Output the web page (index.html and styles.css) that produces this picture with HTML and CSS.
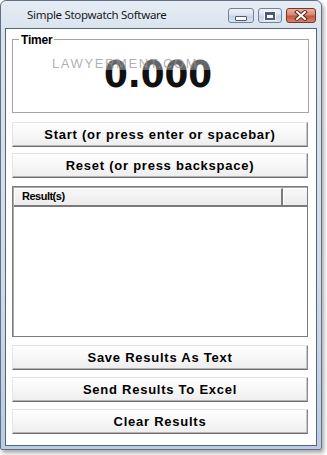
FILE: index.html
```html
<!DOCTYPE html>
<html>
<head>
<meta charset="utf-8">
<title>Simple Stopwatch Software</title>
<link rel="stylesheet" href="styles.css">
</head>
<body>
<div class="window">
  <div class="titlebar">
    <span class="title">Simple Stopwatch Software</span>
    <div class="caption-buttons">
      <div class="cbtn cbtn-min"><span class="min-glyph"></span></div>
      <div class="cbtn cbtn-max"><span class="max-glyph"></span></div>
      <div class="cbtn cbtn-close">
        <svg width="14" height="11" viewBox="0 0 14 11">
          <path d="M3 2 L11 9 M11 2 L3 9" stroke="#5a2a20" stroke-width="4" stroke-linecap="square"/>
          <path d="M3 2 L11 9 M11 2 L3 9" stroke="#ffffff" stroke-width="2" stroke-linecap="square"/>
        </svg>
      </div>
    </div>
  </div>
  <div class="client">
    <div class="groupbox">
      <span class="group-label">Timer</span>
      <div class="timer-value">0.000</div>
      <div class="watermark">LAWYERMENT.COM</div>
    </div>
    <div class="btn btn-start">Start (or press enter or spacebar)</div>
    <div class="btn btn-reset">Reset (or press backspace)</div>
    <div class="listview">
      <div class="lv-header">
        <div class="lv-col lv-col-main">Result(s)</div>
        <div class="lv-col lv-col-rest"></div>
      </div>
      <div class="lv-body"></div>
    </div>
    <div class="btn btn-save">Save Results As Text</div>
    <div class="btn btn-send">Send Results To Excel</div>
    <div class="btn btn-clear">Clear Results</div>
  </div>
</div>
</body>
</html>
```
FILE: styles.css
```css
html, body {
  margin: 0;
  padding: 0;
  background: #ffffff;
}
body {
  width: 327px;
  height: 455px;
  overflow: hidden;
}
.window {
  box-sizing: border-box;
  width: 322px;
  height: 450px;
  border: 1px solid #5f7088;
  border-radius: 6px 6px 2px 2px;
  background: linear-gradient(180deg, #e6edf5 0px, #dae4ef 27px, #cfdceb 60%, #b9cde2 100%);
  padding: 0 4px 3px 4px;
  display: flex;
  flex-direction: column;
  box-shadow: 2px 3px 4px rgba(0, 0, 0, 0.35);
}
.titlebar {
  height: 27px;
  flex: none;
  display: flex;
  align-items: flex-start;
}
.title {
  margin-left: 22px;
  margin-top: 5px;
  font-family: "Noto Sans", "Open Sans", sans-serif;
  font-size: 11.5px;
  line-height: 17px;
  color: #1a1a1a;
  letter-spacing: -0.3px;
}
.caption-buttons {
  margin-left: auto;
  margin-right: 1px;
  margin-top: 7px;
  display: flex;
  gap: 4px;
}
.cbtn {
  box-sizing: border-box;
  height: 15px;
  border: 1px solid #71839c;
  border-radius: 3px;
  display: flex;
  align-items: center;
  justify-content: center;
  background: linear-gradient(180deg, #eef3f9 0%, #d8e3ef 48%, #c3d3e5 52%, #d9e5f1 100%);
}
.cbtn-min { width: 26px; }
.cbtn-max { width: 24px; }
.cbtn-close {
  width: 30px;
  border-color: #7a3426;
  background: linear-gradient(180deg, #eab1a2 0%, #d8836d 48%, #c4533a 52%, #d7836a 100%);
}
.min-glyph {
  width: 10px;
  height: 3px;
  margin-top: 5px;
  border: 1px solid #4c5b70;
  background: #ffffff;
  border-radius: 1px;
}
.max-glyph {
  box-sizing: border-box;
  width: 10px;
  height: 8px;
  border: 1px solid #4c5b70;
  border-top-width: 2px;
  background: #ffffff;
  box-shadow: inset 0 0 0 1px #4c5b70;
  outline: 1px solid rgba(255,255,255,0.7);
}
.client {
  flex: 1;
  box-sizing: border-box;
  background: #ffffff;
  border: 1px solid #56657a;
  padding: 0 8px 0 6px;
  display: flex;
  flex-direction: column;
}
.groupbox {
  position: relative;
  box-sizing: border-box;
  margin-top: 10px;
  width: 297px;
  height: 74px;
  border: 1px solid #a5a5a5;
  display: flex;
  justify-content: center;
  align-items: flex-start;
}
.group-label {
  position: absolute;
  top: -7px;
  left: 6px;
  padding: 0 2px;
  background: #ffffff;
  font-family: "Liberation Sans", Arial, sans-serif;
  font-weight: bold;
  font-size: 12px;
  line-height: 14px;
  color: #000000;
  letter-spacing: -0.2px;
}
.timer-value {
  margin-top: 12px;
  margin-left: -5px;
  font-family: "DejaVu Sans Condensed", "DejaVu Sans", sans-serif;
  font-stretch: condensed;
  font-weight: bold;
  font-size: 38px;
  line-height: 44px;
  color: #111111;
}
.watermark {
  position: absolute;
  left: 39px;
  top: 17px;
  width: 164px;
  height: 13px;
  font-family: "Liberation Sans", Arial, sans-serif;
  font-size: 13px;
  line-height: 13px;
  letter-spacing: 1.6px;
  color: rgba(150, 150, 150, 0.75);
  background: linear-gradient(90deg, rgba(255,255,255,0) 0%, rgba(255,255,255,0.35) 30%, rgba(255,255,255,0.35) 100%);
}
.btn {
  box-sizing: border-box;
  width: 296px;
  height: 25px;
  border: 1px solid;
  border-color: #e4e4e4 #8a8a8a #6e6e6e #e4e4e4;
  box-shadow: inset 0 -1px 0 #b4b4b4, inset -1px 0 0 #c8c8c8;
  background: linear-gradient(180deg, #ffffff 0%, #f7f7f7 50%, #ededed 100%);
  display: flex;
  align-items: center;
  justify-content: center;
  font-family: "Liberation Sans", Arial, sans-serif;
  font-weight: bold;
  font-size: 13px;
  letter-spacing: 0.75px;
  color: #000000;
}
.btn-start { margin-top: 9px; }
.btn-reset { margin-top: 6px; }
.btn-save { margin-top: 8px; }
.btn-send { margin-top: 7px; }
.btn-clear { margin-top: 7px; }
.listview {
  box-sizing: border-box;
  margin-top: 8px;
  width: 296px;
  height: 151px;
  border: 1px solid #7c7c7c;
  box-shadow: inset 1px 1px 0 #a9a9a9;
  display: flex;
  flex-direction: column;
  background: #ffffff;
}
.lv-header {
  display: flex;
  height: 19px;
  flex: none;
  border-bottom: 2px solid #7a7a7a;
  box-sizing: border-box;
  margin: 1px 0 0 1px;
}
.lv-col {
  box-sizing: border-box;
  height: 100%;
  background: linear-gradient(180deg, #f7f7f7 0%, #ececec 100%);
  border-top: 1px solid #ffffff;
  border-left: 1px solid #ffffff;
}
.lv-col-main {
  width: 269px;
  border-right: 2px solid #7a7a7a;
  padding-left: 7px;
  font-family: "Liberation Sans", Arial, sans-serif;
  font-weight: bold;
  font-size: 11px;
  line-height: 15px;
  letter-spacing: -0.5px;
  color: #000000;
}
.lv-col-rest {
  flex: 1;
}
.lv-body {
  flex: 1;
}
```
